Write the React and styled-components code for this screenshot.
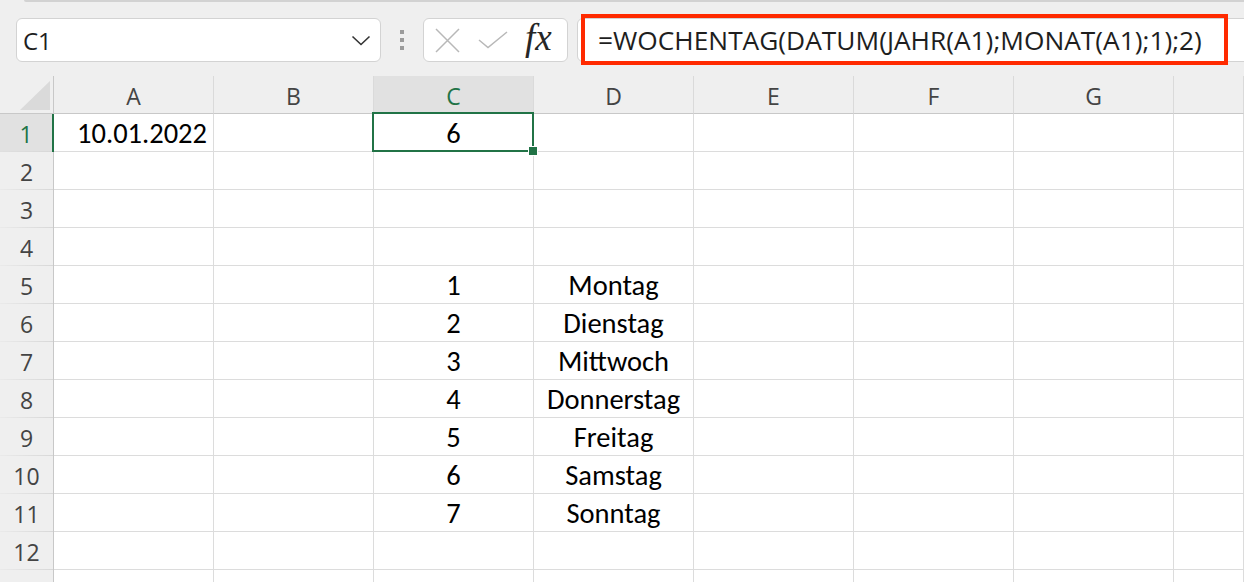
import React from 'react';
import styled, { createGlobalStyle } from 'styled-components';

const GlobalStyle = createGlobalStyle`
    html, body {
        margin: 0;
        padding: 0;
        background: #ffffff;
        overflow: hidden;
    }
`

const Window = styled.div`
    width: 1244px;
    height: 582px;
    overflow: hidden;
    background: #efefef;
    font-family: 'Open Sans', 'Noto Sans', sans-serif;
`

const RibbonEdge = styled.div`
    height: 2px;
    margin-left: 24px;
    background: #d2d2d2;
    border-bottom-left-radius: 4px;
`

const FormulaBar = styled.div`
    display: flex;
    align-items: flex-start;
    height: 74px;
    padding: 16px 0 0 16px;
    box-sizing: border-box;
    overflow: hidden;
`

const Box = styled.div`
    flex-shrink: 0;
    height: 44px;
    box-sizing: border-box;
    background: #ffffff;
    border: 1px solid #d3d3d3;
    border-radius: 6px;
    display: flex;
    align-items: center;
`

const NameBox = styled(Box)`
    width: 365px;
    padding: 0 9px 0 6px;
    justify-content: space-between;
    font-size: 24px;
    color: #1e1e1e;
`

const Grip = styled.div`
    flex-shrink: 0;
    width: 42px;
    height: 44px;
    display: flex;
    flex-direction: column;
    align-items: center;
    justify-content: center;
    gap: 4px;

    & > span {
        width: 4px;
        height: 4px;
        background: #9b9b9b;
    }
`

const FxGroup = styled(Box)`
    width: 145px;
    padding: 0 0 0 11px;
    gap: 18px;
`

const FxLabel = styled.span`
    font-family: 'Liberation Serif', 'DejaVu Serif', serif;
    font-style: italic;
    font-size: 37px;
    color: #262626;
    line-height: 1;
    margin-top: -5px;
    margin-left: -1px;
`

const FormulaBox = styled(Box)`
    position: relative;
    flex: 1 0 auto;
    margin-left: 9px;
    margin-right: -12px;
    padding-left: 20px;
    border-radius: 6px 0 0 6px;
    font-size: 26.3px;
    color: #1e1e1e;
    white-space: nowrap;
`

const Highlight = styled.div`
    position: absolute;
    left: 3px;
    top: -5px;
    width: 647px;
    height: 51px;
    box-sizing: border-box;
    border: 4px solid #ff2a00;
    pointer-events: none;
`

const Sheet = styled.div`
    display: grid;
    grid-template-columns: 54px repeat(7, 160px) 1fr;
    grid-auto-rows: 38px;
    background: #ffffff;
`

const Corner = styled.div`
    background: #efefef;
    border-right: 1px solid #c8c8c8;
    border-bottom: 1px solid #c8c8c8;
    display: flex;
    align-items: flex-end;
    justify-content: flex-end;
    padding: 0 3px 3px 0;

    &::after {
        content: '';
        width: 30px;
        height: 29px;
        background: #dadada;
        clip-path: polygon(100% 0, 100% 100%, 0 100%);
    }
`

const ColHead = styled.div`
    background: ${props => props.$active ? '#e1e1e1' : '#efefef'};
    color: ${props => props.$active ? '#217346' : '#444444'};
    border-right: 1px solid #dadada;
    border-bottom: 1px solid #c8c8c8;
    display: flex;
    align-items: center;
    justify-content: center;
    font-size: 23px;
    padding-top: 2px;
`

const RowHead = styled.div`
    background-color: ${props => props.$active ? '#e1e1e1' : '#efefef'};
    background-image: linear-gradient(to right, rgba(214,214,214,0.2), #d8d8d8);
    background-size: 100% 1px;
    background-position: bottom;
    background-repeat: no-repeat;
    color: ${props => props.$active ? '#217346' : '#444444'};
    border-right: ${props => props.$active ? '2px solid #217346' : '1px solid #c8c8c8'};
    display: flex;
    align-items: center;
    justify-content: center;
    font-size: 23px;
    padding-top: 1px;
`

const Cell = styled.div`
    position: relative;
    border-right: 1px solid #dcdcdc;
    border-bottom: 1px solid #dcdcdc;
    display: flex;
    align-items: center;
    justify-content: ${props => props.$align === 'right' ? 'flex-end' : 'center'};
    padding: 1px 6px 0 6px;
    font-family: 'Carlito', 'Lato', 'Liberation Sans', sans-serif;
    font-size: 28.5px;
    color: #000000;
    white-space: nowrap;
`

const Selection = styled.div`
    position: absolute;
    left: -2px;
    top: -2px;
    right: -1px;
    bottom: -1px;
    border: 2px solid #217346;
    z-index: 2;
    pointer-events: none;

    &::after {
        content: '';
        position: absolute;
        right: -5px;
        bottom: -5px;
        width: 8px;
        height: 8px;
        background: #217346;
        outline: 1px solid #ffffff;
    }
`

const columns = ['A', 'B', 'C', 'D', 'E', 'F', 'G', '']
const days = ['Montag', 'Dienstag', 'Mittwoch', 'Donnerstag', 'Freitag', 'Samstag', 'Sonntag']

const cellData = (row, col) => {
    if (row === 1 && col === 'A') return { text: '10.01.2022', align: 'right' }
    if (row === 1 && col === 'C') return { text: '6' }
    if (row >= 5 && row <= 11 && col === 'C') return { text: String(row - 4) }
    if (row >= 5 && row <= 11 && col === 'D') return { text: days[row - 5] }
    return null
}

const Chevron = () => (
    <svg width="20" height="11" viewBox="0 0 20 11">
        <path d="M1.5 1.5 L10 9.5 L18.5 1.5" fill="none" stroke="#333" strokeWidth="1.6" />
    </svg>
)

const CancelIcon = () => (
    <svg width="25" height="25" viewBox="0 0 25 25">
        <path d="M1 1 L24 24 M24 1 L1 24" fill="none" stroke="#b8b8b8" strokeWidth="1.5" />
    </svg>
)

const CheckIcon = () => (
    <svg width="30" height="18" viewBox="0 0 30 18">
        <path d="M1 9 L10 16.5 L29 1" fill="none" stroke="#b8b8b8" strokeWidth="1.5" />
    </svg>
)

export default function App() {
    const rows = Array.from({ length: 13 }, (_, i) => i + 1)

    return (
        <Window>
            <GlobalStyle />
            <RibbonEdge />
            <FormulaBar>
                <NameBox>
                    <span>C1</span>
                    <Chevron />
                </NameBox>
                <Grip><span /><span /><span /></Grip>
                <FxGroup>
                    <CancelIcon />
                    <CheckIcon />
                    <FxLabel>fx</FxLabel>
                </FxGroup>
                <FormulaBox>
                    =WOCHENTAG(DATUM(JAHR(A1);MONAT(A1);1);2)
                    <Highlight />
                </FormulaBox>
            </FormulaBar>

            <Sheet>
                <Corner />
                {columns.map((c, i) => (
                    <ColHead key={i} $active={c === 'C'}>{c}</ColHead>
                ))}
                {rows.map(r => (
                    <React.Fragment key={r}>
                        <RowHead $active={r === 1}>{r}</RowHead>
                        {columns.map((c, i) => {
                            const d = cellData(r, c)
                            return (
                                <Cell key={i} $align={d && d.align}>
                                    {d && d.text}
                                    {r === 1 && c === 'C' && <Selection />}
                                </Cell>
                            )
                        })}
                    </React.Fragment>
                ))}
            </Sheet>
        </Window>
    )
}
